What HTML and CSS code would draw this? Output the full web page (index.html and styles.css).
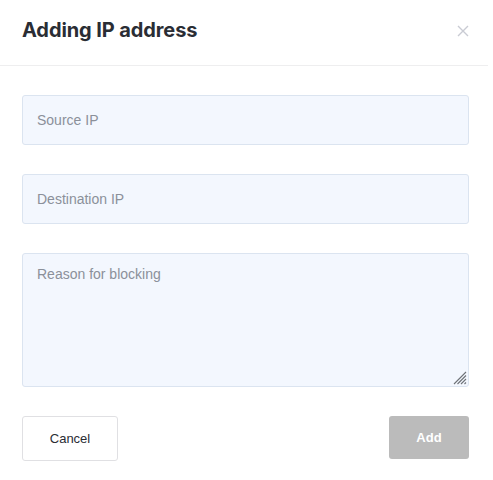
FILE: index.html
```html
<!DOCTYPE html>
<html>
<head>
<meta charset="utf-8">
<link rel="stylesheet" href="styles.css">
</head>
<body>
<div class="modal">
  <div class="modal-header">
    <h2 class="modal-title">Adding IP address</h2>
    <button class="close-btn" aria-label="Close">
      <svg width="12" height="12" viewBox="0 0 12 12"><path d="M1 1L11 11M11 1L1 11" stroke="#c9cbd3" stroke-width="1.4" fill="none"/></svg>
    </button>
  </div>
  <form class="modal-body">
    <input class="field" type="text" placeholder="Source IP">
    <input class="field" type="text" placeholder="Destination IP">
    <div class="area-wrap">
      <textarea class="field area" placeholder="Reason for blocking"></textarea>
      <svg class="grip" width="14" height="14" viewBox="0 0 14 14"><path d="M13 1L1 13M13 4.5L4.5 13M13 8L8 13M13 11.5L11.5 13" stroke="#6f7278" stroke-width="1.1" fill="none"/></svg>
    </div>
    <div class="actions">
      <button type="button" class="btn btn-cancel">Cancel</button>
      <button type="button" class="btn btn-add">Add</button>
    </div>
  </form>
</div>
</body>
</html>
```
FILE: styles.css
```css
html, body {
  margin: 0;
  padding: 0;
  background: #fff;
}
body {
  font-family: "Liberation Sans", Arial, sans-serif;
}
.modal {
  width: 488px;
  background: #fff;
}
.modal-header {
  height: 66px;
  box-sizing: border-box;
  border-bottom: 1px solid #eeeeef;
  display: flex;
  align-items: center;
  justify-content: space-between;
  padding: 0 18px 6px 22px;
}
.modal-title {
  margin: 0;
  font-family: Inter, "Liberation Sans", sans-serif;
  font-weight: 700;
  font-size: 20px;
  color: #2a2d34;
  letter-spacing: -0.1px;
}
.close-btn {
  border: 0;
  background: none;
  padding: 0;
  width: 14px;
  height: 14px;
  display: flex;
  align-items: center;
  justify-content: center;
  margin-top: 2px;
}
.modal-body {
  display: flex;
  flex-direction: column;
  gap: 29px;
  padding: 29px 19px 0 22px;
}
.field {
  display: block;
  box-sizing: border-box;
  width: 100%;
  height: 50px;
  margin: 0;
  padding: 0 14px;
  border: 1px solid #dbe4f0;
  border-radius: 3px;
  background: #f3f7fe;
  font-family: "Liberation Sans", Arial, sans-serif;
  font-size: 14px;
  color: #333;
  outline: none;
}
.field::placeholder {
  color: #8b909a;
}
.area-wrap {
  position: relative;
}
.area {
  height: 134px;
  padding-top: 12px;
  resize: none;
}
.grip {
  position: absolute;
  right: 2px;
  bottom: 2px;
}
.actions {
  display: flex;
  justify-content: space-between;
  align-items: flex-start;
}
.btn {
  font-family: "Liberation Sans", Arial, sans-serif;
  font-size: 13px;
  border-radius: 3px;
  cursor: pointer;
}
.btn-cancel {
  width: 96px;
  height: 45px;
  background: #fff;
  border: 1px solid #e0e0e3;
  color: #2a2d34;
}
.btn-add {
  width: 80px;
  height: 43px;
  background: #bbbbbb;
  border: 0;
  color: #fff;
  font-weight: 700;
}
```
